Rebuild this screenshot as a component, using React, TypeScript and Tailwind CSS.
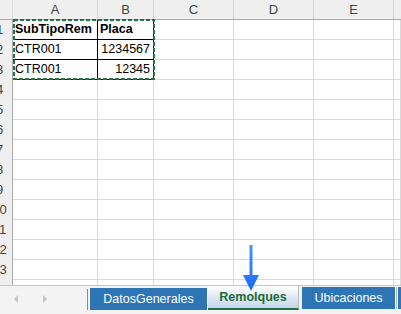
import React from 'react';

const font = { fontFamily: '"Liberation Sans", Arial, sans-serif' };

// anchos de columna (incluye el borde derecho)
const columns = [
  { key: 'A', className: 'w-[85px]' },
  { key: 'B', className: 'w-[56px]' },
  { key: 'C', className: 'w-[80px]' },
  { key: 'D', className: 'w-[80px]' },
  { key: 'E', className: 'w-[80px]' },
];

const data: Record<number, { a: string; b: string; bold?: boolean }> = {
  1: { a: 'SubTipoRem', b: 'Placa', bold: true },
  2: { a: 'CTR001', b: '1234567' },
  3: { a: 'CTR001', b: '12345' },
};

const RowHeader: React.FC<{ n: number }> = ({ n }) => (
  <div className="w-[13px] shrink-0 overflow-hidden border-r border-[#ababab] bg-[#efefef]">
    <div className="-ml-[13px] w-[25px] text-center text-[13px] leading-[19px] text-[#444]">{n}</div>
  </div>
);

const Row: React.FC<{ n: number }> = ({ n }) => {
  const d = data[n];
  const base = 'h-[20px] shrink-0 border-b border-r text-[12.5px] leading-[19px] text-black';
  return (
    <div className="flex">
      <RowHeader n={n} />
      <div className={`${base} w-[85px] pl-[2px] ${d ? 'border-black' : 'border-[#dadada]'} ${d?.bold ? 'font-bold' : ''}`}>
        {d?.a}
      </div>
      <div className={`${base} w-[56px] ${d ? 'border-black' : 'border-[#dadada]'} ${d?.bold ? 'pl-[2px] font-bold' : 'pr-[3px] text-right'}`}>
        {d?.b}
      </div>
      <div className={`${base} w-[80px] border-[#dadada]`} />
      <div className={`${base} w-[80px] border-[#dadada]`} />
      <div className={`${base} w-[80px] border-[#dadada]`} />
      <div className={`${base} flex-1 border-[#dadada]`} />
    </div>
  );
};

export default function App() {
  const rows = Array.from({ length: 14 }, (_, i) => i + 1);

  return (
    <div className="relative flex h-[314px] w-[401px] flex-col overflow-hidden bg-white" style={font}>
      {/* hoja */}
      <div className="h-[285px] shrink-0 overflow-hidden">
        <div className="flex h-[20px] border-b border-[#ababab] bg-[#efefef]">
          <div className="w-[13px] shrink-0 border-r border-[#dadada]" />
          {columns.map((c) => (
            <div
              key={c.key}
              className={`${c.className} shrink-0 border-r border-[#d4d4d4] text-center text-[13px] leading-[19px] text-[#444]`}
            >
              {c.key}
            </div>
          ))}
          <div className="flex-1" />
        </div>
        {rows.map((n) => (
          <Row key={n} n={n} />
        ))}
      </div>

      {/* pestañas */}
      <div className="flex h-[29px] shrink-0 border-t border-[#c6c6c6] bg-[#f3f3f3] text-[12.5px]">
        <div className="flex w-[87px] shrink-0 items-start pt-[9px]">
          <svg className="ml-[14px]" width="4" height="8" viewBox="0 0 4 8">
            <polygon points="4,0 0,4 4,8" fill="#c4c4c4" />
          </svg>
          <svg className="ml-[25px]" width="4" height="8" viewBox="0 0 4 8">
            <polygon points="0,0 4,4 0,8" fill="#c4c4c4" />
          </svg>
        </div>
        <div className="mt-[3px] h-[21px] w-px shrink-0 bg-[#8c8c8c]" />
        <div className="ml-[2px] mt-[2px] flex h-[22px] w-[117px] shrink-0 items-center justify-center bg-[#2e75b6] text-white">
          DatosGenerales
        </div>
        <div className="ml-[1px] flex h-[24px] w-[91px] shrink-0 items-center justify-center border-b-2 border-r border-[#1f7244] border-r-[#b9b9b9] bg-gradient-to-b from-white to-[#c3d5ec] font-bold text-[#1e6b36]">
          Remolques
        </div>
        <div className="ml-[3px] mt-[1px] flex h-[22px] w-[93px] shrink-0 items-center justify-center bg-[#2e75b6] text-white">
          Ubicaciones
        </div>
        <div className="ml-[1px] mt-[1px] h-[22px] w-px shrink-0 bg-[#b9b9b9]" />
        <div className="ml-[1px] mt-[1px] h-[22px] flex-1 bg-[#2e75b6]" />
      </div>

      {/* selección copiada */}
      <svg className="pointer-events-none absolute left-0 top-0" width="401" height="100">
        <rect x="14" y="20" width="140" height="59" fill="none" stroke="#217346" strokeWidth="2" strokeDasharray="4 2" />
      </svg>

      {/* flecha */}
      <svg className="pointer-events-none absolute left-[242px] top-[243px]" width="18" height="50" viewBox="0 0 18 50">
        <defs>
          <linearGradient id="arr" x1="0" y1="0" x2="0" y2="1">
            <stop offset="0" stopColor="#4b93ff" />
            <stop offset="1" stopColor="#1a6cf5" />
          </linearGradient>
        </defs>
        <path d="M7.5 2 L10.5 2 L10.5 32 L17 32 L9 48 L1 32 L7.5 32 Z" fill="url(#arr)" />
      </svg>
    </div>
  );
}
